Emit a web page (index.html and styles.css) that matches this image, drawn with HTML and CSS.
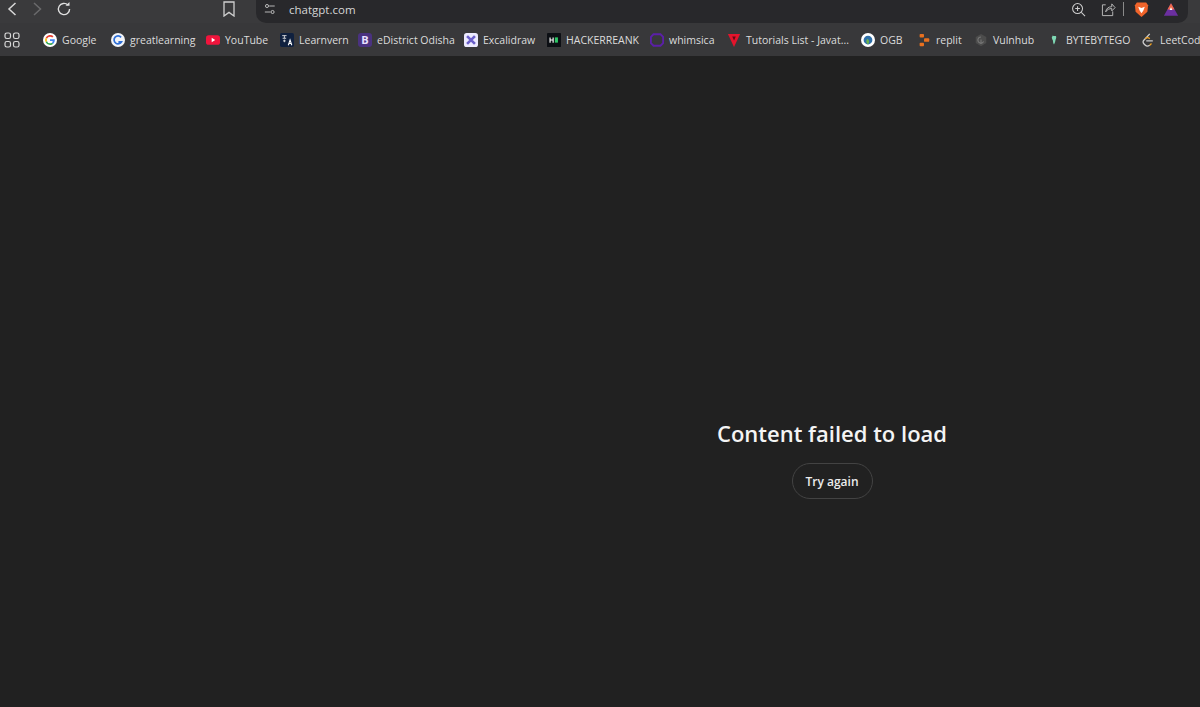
FILE: index.html
```html
<!DOCTYPE html>
<html lang="en">
<head>
    <meta charset="UTF-8">
    <meta name="viewport" content="width=device-width, initial-scale=1.0">
    <title>chatgpt.com</title>
    <link rel="stylesheet" href="styles.css">
</head>
<body>
    <div class="browser-top">
        <div class="nav-buttons">
            <svg class="nav-icon back" viewBox="0 0 12 16"><path d="M9.5 2 3 8l6.500 6" fill="none" stroke="#d8d8d8" stroke-width="1.5"/></svg>
            <svg class="nav-icon forward" viewBox="0 0 12 16"><path d="M3 2l6.500 6L3 14" fill="none" stroke="#6a6a6c" stroke-width="1.500"/></svg>
            <svg class="nav-icon reload" viewBox="0 0 16 16"><path d="M13.600 8a5.600 5.600 0 1 1-1.700-4" fill="none" stroke="#e0e0e0" stroke-width="1.400"/><path d="M9.500 4.800h4V1z" fill="#e0e0e0"/></svg>
            <svg class="nav-icon bookmark" viewBox="0 0 14 16"><path d="M2 1h10v14l-5-3.600L2 15z" fill="none" stroke="#cfcfcf" stroke-width="1.300"/></svg>
        </div>
        <div class="address-bar">
            <svg class="site-icon" viewBox="0 0 14 14"><g fill="none" stroke="#cfcfcf" stroke-width="1"><circle cx="3.500" cy="3.500" r="1.800"/><path d="M6 3.500h6.500M1 10.500h6.500"/><circle cx="10" cy="10.500" r="1.800"/></g></svg>
            <span class="url">chatgpt.com</span>
            <div class="address-actions">
                <svg class="action-icon" viewBox="0 0 16 16"><g fill="none" stroke="#cfcfcf" stroke-width="1.100"><circle cx="7" cy="7" r="5.300"/><path d="M7 4.500v5M4.500 7h5M11 11l4 4"/></g></svg>
                <svg class="action-icon share" viewBox="0 0 16 16"><path d="M5 3H1.500v11.500h11V10M5 10.500C5.500 7 8 5 11.500 5V2l3.500 4-3.500 3.500V7C9 7 6.500 8 5 10.500z" fill="none" stroke="#bdbdbd" stroke-width="1"/></svg>
                <span class="action-divider"></span>
                <svg class="action-icon brave" viewBox="0 0 16 18"><path d="M3 1.500h10L15 4.500l-.7 7L8 17l-6.300-5.500-.7-7z" fill="#f0642b"/><path d="M4.500 6 8 7.500 11.500 6 10 10l-2 3-2-3z" fill="#fff"/></svg>
                <svg class="action-icon rewards" viewBox="0 0 18 16"><path d="M9 1l8 14H1z" fill="#6b2fa0"/><path d="M9 1l4 7H5z" fill="#ef6a4a"/><path d="M9 5.500l1.600 3H7.400z" fill="#fff"/></svg>
            </div>
        </div>
    </div>

    <div class="bookmarks-bar">
        <svg class="apps-icon" viewBox="0 0 16 16"><g fill="none" stroke="#d8d8d8" stroke-width="1.200"><rect x="1" y="1" width="5.500" height="5.500" rx="1.800"/><rect x="9.500" y="1" width="5.500" height="5.500" rx="1.800"/><rect x="1" y="9.500" width="5.500" height="5.500" rx="1.800"/><rect x="9.500" y="9.500" width="5.500" height="5.500" rx="1.800"/></g></svg>
        <span class="bar-divider"></span>

        <a class="bookmark-item w-google">
            <svg class="fav" viewBox="0 0 16 16"><circle cx="8" cy="8" r="8" fill="#fff"/><path d="M8 4.200a3.800 3.800 0 0 1 2.600 1l1.400-1.400A5.700 5.700 0 0 0 3 5.400l1.600 1.300A3.600 3.600 0 0 1 8 4.200z" fill="#ea4335"/><path d="M4.600 6.700 3 5.400a5.700 5.700 0 0 0 0 5.200l1.600-1.300a3.600 3.600 0 0 1 0-2.600z" fill="#fbbc05"/><path d="M8 11.800a3.600 3.600 0 0 1-3.400-2.500L3 10.600a5.700 5.700 0 0 0 8.800 1.600l-1.500-1.200a3.700 3.700 0 0 1-2.300.8z" fill="#34a853"/><path d="M13.500 8c0-.4 0-.7-.1-1H8v2.200h3.100a2.700 2.700 0 0 1-.8 1.800l1.500 1.200a5.500 5.500 0 0 0 1.700-4.200z" fill="#4285f4"/></svg>
            Google
        </a>
        <a class="bookmark-item w-great">
            <svg class="fav" viewBox="0 0 16 16"><circle cx="8" cy="8" r="8" fill="#f2f4f8"/><path d="M11.500 5A4.500 4.500 0 1 0 12 10H8.500" fill="none" stroke="#2f6fd6" stroke-width="2"/></svg>
            greatlearning
        </a>
        <a class="bookmark-item w-youtube">
            <svg class="fav" viewBox="0 0 16 16"><rect y="2.500" width="16" height="11" rx="3" fill="#f0143c"/><path d="M6.500 5.500 10.500 8l-4 2.500z" fill="#fff"/></svg>
            YouTube
        </a>
        <a class="bookmark-item w-learn">
            <svg class="fav" viewBox="0 0 16 16"><rect width="16" height="16" rx="2" fill="#10213f"/><path d="M2.500 3h5M5 3v3M3 6h4M3.500 9h3M5 7.500v3" stroke="#e6e6e6" stroke-width="1"/><path d="M9.500 14l2-6 2 6M10.200 12h2.600" fill="none" stroke="#fff" stroke-width="1.200"/></svg>
            Learnvern
        </a>
        <a class="bookmark-item w-edistrict">
            <span class="fav letter-fav">B</span>
            eDistrict Odisha
        </a>
        <a class="bookmark-item w-excali">
            <svg class="fav" viewBox="0 0 16 16"><rect width="16" height="16" rx="3" fill="#eceaff"/><path d="M3.500 3.500 12.500 12.500M12.500 3.500 3.500 12.500" stroke="#6a5fc9" stroke-width="3"/></svg>
            Excalidraw
        </a>
        <a class="bookmark-item w-hacker">
            <svg class="fav" viewBox="0 0 16 16"><rect width="16" height="16" rx="1" fill="#0c0f14"/><path d="M3.500 5v6M7 5v6M3.500 8H7" stroke="#fff" stroke-width="1.300"/><rect x="9" y="5" width="3.500" height="6" fill="#2ec866"/></svg>
            HACKERREANK
        </a>
        <a class="bookmark-item w-whim">
            <svg class="fav" viewBox="0 0 16 16"><path d="M4 1.500h8L15 4.500v7L12 14.500H4L1 11.500v-7z" fill="none" stroke="#5b1fa8" stroke-width="2.200"/></svg>
            whimsica
        </a>
        <a class="bookmark-item w-tutorials">
            <svg class="fav" viewBox="0 0 16 16"><path d="M1 1h14L8 16z" fill="#e3142c"/><path d="M6 4h4L8 8.500z" fill="#5c0a14"/></svg>
            Tutorials List - Javat...
        </a>
        <a class="bookmark-item w-ogb">
            <svg class="fav" viewBox="0 0 16 16"><circle cx="8" cy="8" r="8" fill="#fff"/><circle cx="8" cy="8" r="5" fill="#2f6fa8"/><path d="M8 13c-2.500-2-2.500-5-.5-6.500C9.500 8 10 10.500 8 13z" fill="#6fb44a"/></svg>
            OGB
        </a>
        <a class="bookmark-item w-replit">
            <svg class="fav" viewBox="0 0 16 16"><g fill="#e8701f"><rect x="3" y="1" width="5" height="4" rx="1"/><rect x="8" y="6" width="6" height="4" rx="1"/><rect x="3" y="11" width="5" height="4" rx="1"/></g></svg>
            replit
        </a>
        <a class="bookmark-item w-vuln">
            <svg class="fav" viewBox="0 0 16 16"><path d="M8 1l6 3.500v7L8 15l-6-3.500v-7z" fill="#4c4c4c"/><path d="M8 4.500a3.500 3.500 0 1 0 3 5.200M8 7.500v5" fill="none" stroke="#777" stroke-width="1.200"/></svg>
            Vulnhub
        </a>
        <a class="bookmark-item w-byte">
            <svg class="fav" viewBox="0 0 16 16"><path d="M5.500 5c0-1 1-1 1.200-2.500C7.500 4 8 3 10 3.500c1 .5.500 3-.3 4.500-.2 2-1 4-1.700 5-.8-1-1.200-3-1.200-4.500C6 7 5.500 6 5.500 5z" fill="#7fd8b4"/></svg>
            BYTEBYTEGO
        </a>
        <a class="bookmark-item w-leet">
            <svg class="fav" viewBox="0 0 16 16"><path d="M10 1 3 8.500c-1 1.500-.5 3 .5 4l1.500 1.500c1 1 3.500 1 5 0" fill="none" stroke="#cfcfcf" stroke-width="1.500"/><path d="M6 9h7.500" stroke="#cfcfcf" stroke-width="1.400"/><path d="M5 6.500c1.500-1.500 3.500-1.500 5 0M10 14l2-2" fill="none" stroke="#f0a020" stroke-width="1.500"/></svg>
            LeetCode
        </a>
    </div>

    <main class="page">
        <h1 class="error-title">Content failed to load</h1>
        <button class="retry-button">Try again</button>
    </main>
</body>
</html>
```

FILE: styles.css
```css
html, body {
    margin: 0;
    height: 100%;
}

body {
    font-family: 'Open Sans', 'Noto Sans', sans-serif;
    background-color: #212121;
    overflow: hidden;
    display: flex;
    flex-direction: column;
}

svg {
    display: block;
    flex-shrink: 0;
}

/* top row of the browser */
.browser-top {
    display: flex;
    height: 23px;
    background-color: #3a3a3c;
}

.nav-buttons {
    display: flex;
    align-items: center;
    width: 256px;
    flex-shrink: 0;
    padding-bottom: 5px;
    box-sizing: border-box;
}

.nav-icon.back {
    width: 12px;
    height: 16px;
    margin-left: 6px;
}

.nav-icon.forward {
    width: 12px;
    height: 16px;
    margin-left: 13px;
}

.nav-icon.reload {
    width: 16px;
    height: 16px;
    margin-left: 13px;
}

.nav-icon.bookmark {
    width: 14px;
    height: 16px;
    margin-left: 150px;
}

.address-bar {
    flex: 1;
    margin-right: 12px;
    display: flex;
    align-items: center;
    background-color: #28282b;
    border-radius: 0 0 10px 10px;
    padding-left: 8px;
    padding-bottom: 5px;
}

.site-icon {
    width: 12px;
    height: 12px;
}

.url {
    margin-left: 13px;
    font-size: 11.5px;
    color: #d6d6d6;
}

.address-actions {
    margin-left: auto;
    display: flex;
    align-items: center;
}

.action-icon {
    width: 15px;
    height: 15px;
    margin-right: 15px;
}

.action-icon.share {
    margin-right: 7px;
}

.action-icon.brave {
    width: 15px;
    height: 17px;
    margin-right: 14px;
}

.action-icon.rewards {
    width: 16px;
    height: 15px;
    margin-right: 9px;
}

.action-divider {
    width: 1px;
    height: 14px;
    background-color: #8a8a8a;
    margin-right: 10px;
}

/* bookmarks */
.bookmarks-bar {
    display: flex;
    align-items: center;
    height: 33px;
    background-color: #38383a;
    white-space: nowrap;
    overflow: hidden;
    flex-shrink: 0;
}

.apps-icon {
    width: 16px;
    height: 16px;
    margin-left: 4px;
}

.bar-divider {
    width: 1px;
    height: 14px;
    background-color: #5a5a5c;
    margin-left: 11px;
    margin-right: 12px;
}

.bookmark-item {
    display: flex;
    align-items: center;
    gap: 5px;
    font-size: 10.5px;
    color: #dcdcdc;
    flex-shrink: 0;
}

.fav {
    width: 14px;
    height: 14px;
}

.letter-fav {
    display: block;
    background-color: #4a3280;
    color: #e8e0ff;
    border-radius: 3px;
    font-size: 11px;
    font-weight: 700;
    line-height: 14px;
    text-align: center;
}

.w-google { width: 68px; }
.w-great { width: 95px; }
.w-youtube { width: 74px; }
.w-learn { width: 78px; }
.w-edistrict { width: 106px; }
.w-excali { width: 83px; }
.w-hacker { width: 103px; }
.w-whim { width: 77px; }
.w-tutorials { width: 134px; }
.w-ogb { width: 56px; }
.w-replit { width: 57px; }
.w-vuln { width: 73px; }
.w-byte { width: 94px; }

/* page content */
.page {
    flex: 1;
    display: flex;
    flex-direction: column;
    align-items: center;
    padding-left: 464px;
    padding-top: 362px;
}

.error-title {
    margin: 0;
    font-size: 22px;
    font-weight: 600;
    line-height: 30px;
    color: #f4f4f4;
}

.retry-button {
    margin-top: 15px;
    width: 81px;
    height: 36px;
    padding: 0;
    background: none;
    border: 1px solid #434343;
    border-radius: 18px;
    font-family: inherit;
    font-size: 12px;
    font-weight: 600;
    color: #ececec;
}
```
